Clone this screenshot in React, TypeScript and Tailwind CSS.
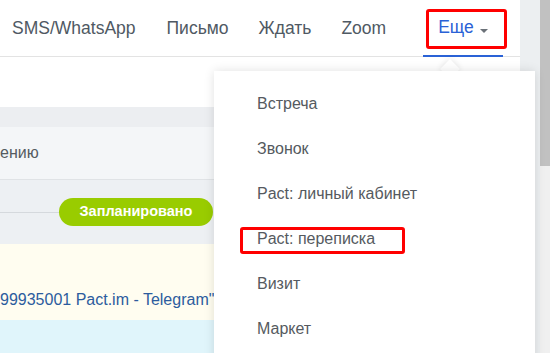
import React from "react";

export default function App() {
  const items = ["Встреча", "Звонок", "Pact: личный кабинет", "Pact: переписка", "Визит", "Маркет"];
  return (
    <div
      className="relative flex h-[353px] w-[550px] overflow-hidden bg-white"
      style={{ fontFamily: '"Liberation Sans", Arial, sans-serif' }}
    >
      <div className="flex w-[520px] flex-col">
        <div className="flex h-[57px] items-stretch border-b border-[#e3e3e3] pl-[12px] text-[17.5px] text-[#4f5963]">
          <div className="flex items-center">SMS/WhatsApp</div>
          <div className="ml-[31px] flex items-center">Письмо</div>
          <div className="ml-[30px] flex items-center">Ждать</div>
          <div className="ml-[30px] flex items-center">Zoom</div>
          <div className="-mb-px ml-[37px] flex items-center border-b-2 border-[#2a62d6] px-[15px] text-[#2a62d6]">
            <span>Еще</span>
            <span className="ml-[6px] mt-[6px] h-0 w-0 border-x-[4px] border-t-[4px] border-x-transparent border-t-[#6b7178]" />
          </div>
        </div>
        <div className="h-[50px] bg-white" />
        <div className="h-[20px] bg-[#eceef1]" />
        <div className="flex h-[53px] items-center border-b border-[#e0e3e6] bg-[#f4f6f8] text-[16px] text-[#555b61]">
          ению
        </div>
        <div className="relative flex h-[64px] items-center bg-[#edf0f3]">
          <div className="h-px w-[59px] bg-[#d5d9dd]" />
          <div className="flex h-[28px] w-[154px] items-center justify-center rounded-full bg-[#99cc00] text-[14.5px] font-bold text-white">
            Запланировано
          </div>
        </div>
        <div className="flex h-[76px] items-end bg-[#fffdf0] pb-[10px] text-[16px] leading-[20px] text-[#2c5c9e]">
          <span>99935001 Pact.im - Telegram"</span>
        </div>
        <div className="flex-1 bg-[#e0f5fb]" />
      </div>
      <div className="w-[20px] bg-[#eceff1]" />
      <div className="flex w-[10px] flex-col bg-[#f0f0f0]">
        <div className="h-[166px] bg-[#c1c1c1]" />
      </div>

      <div className="absolute left-[426px] top-[9px] h-[40px] w-[81px] rounded-[3px] border-[3px] border-[#ff0000]" />

      <div className="absolute left-[443px] top-[62px] h-[14px] w-[14px] rotate-45 bg-white shadow-[0_0_6px_rgba(0,0,0,0.12)]" />
      <div className="absolute left-[214px] top-[71px] h-[300px] w-[321px] bg-white pt-[10px] shadow-[0_0_10px_rgba(0,0,0,0.12)]">
        {items.map((t) => (
          <div key={t} className="flex h-[45px] items-center pl-[43px] text-[16px] text-[#555a60]">
            {t}
          </div>
        ))}
      </div>
      <div className="absolute left-[240px] top-[227px] h-[27px] w-[165px] rounded-[3px] border-[3px] border-[#ff0000]" />
    </div>
  );
}
